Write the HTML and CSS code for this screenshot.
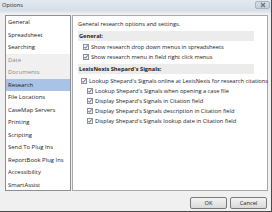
FILE: index.html
```html
<!DOCTYPE html>
<html>
<head>
<meta charset="utf-8">
<link rel="stylesheet" href="styles.css">
</head>
<body>
<div class="window">
  <div class="titlebar">
    <span class="title">Options</span>
    <span class="close"><svg width="8" height="6" viewBox="0 0 8 6"><path d="M2 1 L6 5 M6 1 L2 5" stroke="#6a7480" stroke-width="1.2"/></svg></span>
  </div>
  <div class="content">
    <div class="main">
      <ul class="list">
        <li>General</li>
        <li>Spreadsheet</li>
        <li>Searching</li>
        <li class="disabled">Date</li>
        <li class="disabled">Documents</li>
        <li class="selected">Research</li>
        <li>File Locations</li>
        <li>CaseMap Servers</li>
        <li>Printing</li>
        <li>Scripting</li>
        <li>Send To Plug Ins</li>
        <li>ReportBook Plug Ins</li>
        <li>Accessibility</li>
        <li>SmartAssist</li>
      </ul>
      <div class="panel">
        <div class="desc">General research options and settings.</div>
        <div class="band">General:</div>
        <div class="row ind1"><span class="cb"></span>Show research drop down menus in spreadsheets</div>
        <div class="row ind1"><span class="cb"></span>Show research menu in field right click menus</div>
        <div class="band band2">LexisNexis Shepard's Signals:</div>
        <div class="row ind0"><span class="cb"></span>Lookup Shepard's Signals online at LexisNexis for research citations</div>
        <div class="row ind2"><span class="cb"></span>Lookup Shepard's Signals when opening a case file</div>
        <div class="row ind2"><span class="cb"></span>Display Shepard's Signals in Citation field</div>
        <div class="row ind2"><span class="cb"></span>Display Shepard's Signals description in Citation field</div>
        <div class="row ind2"><span class="cb"></span>Display Shepard's Signals lookup date in Citation field</div>
      </div>
    </div>
    <div class="buttons">
      <button class="btn">OK</button>
      <button class="btn">Cancel</button>
    </div>
  </div>
</div>
</body>
</html>
```
FILE: styles.css
```css
html, body {
  margin: 0;
  padding: 0;
}
body {
  width: 272px;
  height: 212px;
  overflow: hidden;
  font-family: "Open Sans", "Noto Sans", sans-serif;
  font-size: 5.7px;
  color: #1c1c1c;
}
.window {
  box-sizing: border-box;
  width: 272px;
  height: 212px;
  background: #f0f0f0;
  border-right: 1px solid #4a4a4a;
  border-bottom: 1px solid #4a4a4a;
  display: flex;
  flex-direction: column;
}
.titlebar {
  height: 13px;
  box-sizing: border-box;
  background: linear-gradient(#e3e9f0, #d6dfe9 80%, #e6ebf1);
  display: flex;
  justify-content: space-between;
  align-items: flex-start;
  padding-left: 2px;
  padding-right: 1px;
}
.title {
  line-height: 11px;
  color: #2a2f36;
}
.close {
  margin-top: 1px;
  width: 15px;
  height: 8px;
  box-sizing: border-box;
  border: 1px solid #a8b3c0;
  border-radius: 2px;
  background: linear-gradient(#d7dee7, #c4cdd8);
  display: flex;
  align-items: center;
  justify-content: center;
}
.close svg { display: block; }
.content {
  flex: 1;
  display: flex;
  flex-direction: column;
  padding: 2px 3px 0 5px;
}
.main {
  display: flex;
  gap: 1px;
  height: 176px;
}
.list {
  list-style: none;
  margin: 0;
  padding: 0;
  width: 67px;
  box-sizing: border-box;
  border: 1px solid #8c8f94;
  background: #fff;
}
.list li {
  height: 12.5px;
  line-height: 12.5px;
  padding-left: 2px;
  white-space: nowrap;
  font-size: 5.9px;
}
.list li.disabled {
  background: #f0f0f0;
  color: #8a8a8a;
}
.list li.selected {
  background: #a9c3e6;
}
.panel {
  width: 196px;
  box-sizing: border-box;
  border: 1px solid #a9a9a9;
  background: #fff;
  padding: 3px 13px 0 5px;
}
.desc {
  height: 10px;
  line-height: 10px;
  white-space: nowrap;
}
.band {
  margin-top: 2px;
  height: 10px;
  line-height: 10px;
  background: #ececec;
  font-weight: bold;
  padding-left: 1px;
  white-space: nowrap;
}
.band2 { margin-top: 2px; }
.row {
  height: 10px;
  line-height: 10px;
  display: flex;
  align-items: center;
  white-space: nowrap;
}
.band + .row { margin-top: 1px; }
.band2 + .row { margin-top: 2px; }
.ind0 { padding-left: 3px; }
.ind1 { padding-left: 5px; }
.ind2 { padding-left: 9px; }
.cb {
  flex: none;
  width: 6px;
  height: 6px;
  box-sizing: border-box;
  border: 1px solid #8f8f8f;
  background-color: #f4f4f4;
  background-image: url("data:image/svg+xml,%3Csvg xmlns='http://www.w3.org/2000/svg' width='4' height='4' viewBox='0 0 4 4'%3E%3Cpath d='M0.5 2 L1.5 3.3 L3.6 0.4' fill='none' stroke='%233b5896' stroke-width='0.9'/%3E%3C/svg%3E");
  background-repeat: no-repeat;
  background-position: center;
  margin-right: 2px;
}
.buttons {
  display: flex;
  justify-content: flex-end;
  gap: 3px;
  margin-top: 6px;
  padding-right: 1px;
}
.btn {
  width: 37px;
  height: 12px;
  box-sizing: border-box;
  margin: 0;
  padding: 0;
  border: 1px solid #7a7a7a;
  border-radius: 2px;
  background: linear-gradient(#f4f4f4, #e6e6e6 50%, #d9d9d9);
  font-family: "Open Sans", "Noto Sans", sans-serif;
  font-size: 5.7px;
  color: #1c1c1c;
  line-height: 10px;
}
```
